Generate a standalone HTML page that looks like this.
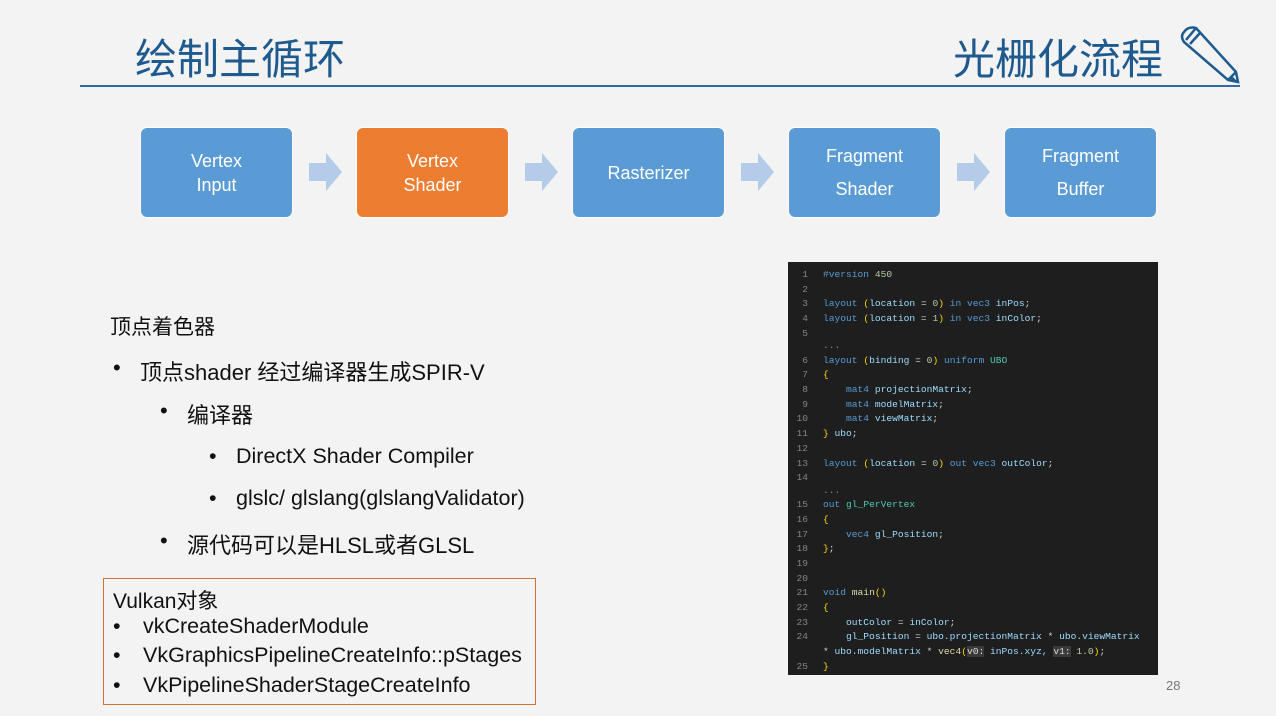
<!DOCTYPE html><html><head><meta charset="utf-8"><style>
body{margin:0;width:1276px;height:716px;background:#f3f3f3;position:relative;overflow:hidden;font-family:"Liberation Sans","Noto Sans CJK SC",sans-serif}
.a{position:absolute}
.t{color:#1f5a8f;font-size:42px;font-family:"Noto Sans CJK SC",sans-serif;line-height:1}
.box{position:absolute;top:127px;width:153px;height:91px;background:#5b9bd5;border:1px solid #fff;border-radius:7px;color:#fff;font-size:18px;display:flex;align-items:center;justify-content:center;text-align:center;line-height:24px;box-sizing:border-box}
.txt{position:absolute;color:#111;font-size:21px;font-family:"Liberation Sans","Noto Sans CJK SC",sans-serif;white-space:nowrap}
.txt b{font-weight:normal;position:absolute;left:-27px}
.code{position:absolute;left:788px;top:262px;width:370px;height:413px;background:#1e1e1e;font-family:"Liberation Mono",monospace;font-size:9.6px;color:#9cdcfe}
.code div{height:14.7px;line-height:14.7px;white-space:pre;position:relative;padding-left:35px}
.code div.e{height:12.3px;line-height:10px;color:#888}
.code span.n{position:absolute;left:0;width:20px;text-align:right;color:#858585}
.k{color:#569cd6}.y{color:#ffd700}.g{color:#4ec9b0}.f{color:#dcdcaa}.c{color:#b5cea8}.w{color:#d4d4d4}.h{background:#3a3a3a;color:#ddd}
</style></head><body>
<div class="a t" style="left:135px;top:36px">绘制主循环</div>
<div class="a t" style="left:953px;top:36px">光栅化流程</div>
<svg class="a" style="left:1178px;top:24px" width="64" height="62" viewBox="0 0 64 62"><g fill="none" stroke="#1f5a8f" stroke-width="2.5"><path d="M6 8 Q10 2 18 4 L58 48 L60 58 L50 56 L6 18 Q2 12 6 8Z"/><path d="M18 4 L8 16 M22 9 L12 20"/><path d="M50 56 L58 48"/></g><path d="M54 52 L60 58 L52 57Z" fill="#1f5a8f"/></svg>
<div class="a" style="left:80px;top:85px;width:1160px;height:2px;background:#2e6da4"></div>
<div class="box" style="left:140px">Vertex<br>Input</div>
<div class="box" style="left:356px;background:#ed7d31">Vertex<br>Shader</div>
<div class="box" style="left:572px">Rasterizer</div>
<div class="box" style="left:788px;line-height:33px">Fragment<br>Shader</div>
<div class="box" style="left:1004px;line-height:33px">Fragment<br>Buffer</div>
<svg class="a" style="left:0;top:0" width="1276" height="300"><g fill="#b4cbe9"><path d="M309 163h17v-10l16 19-16 19v-10h-17z"/><path d="M525 163h17v-10l16 19-16 19v-10h-17z"/><path d="M741 163h17v-10l16 19-16 19v-10h-17z"/><path d="M957 163h17v-10l16 19-16 19v-10h-17z"/></g></svg>
<div class="txt" style="left:110px;top:311px">顶点着色器</div>
<div class="txt" style="left:140px;top:355px;font-size:22px"><b>•</b>顶点shader 经过编译器生成SPIR-V</div>
<div class="txt" style="left:187px;top:398px;font-size:22px"><b>•</b>编译器</div>
<div class="txt" style="left:236px;top:444px;font-size:21.5px"><b>•</b>DirectX Shader Compiler</div>
<div class="txt" style="left:236px;top:486px;font-size:21.5px"><b>•</b>glslc/ glslang(glslangValidator)</div>
<div class="txt" style="left:187px;top:528px;font-size:22px"><b>•</b>源代码可以是HLSL或者GLSL</div>
<div class="a" style="left:103px;top:578px;width:433px;height:127px;border:1px solid #d0703a;box-sizing:border-box"></div>
<div class="txt" style="left:113px;top:585px;font-size:21px">Vulkan对象</div>
<div class="txt" style="left:143px;top:614px;font-size:21.5px"><b style="left:-30px">•</b>vkCreateShaderModule</div>
<div class="txt" style="left:143px;top:643px;font-size:21.5px"><b style="left:-30px">•</b>VkGraphicsPipelineCreateInfo::pStages</div>
<div class="txt" style="left:143px;top:673px;font-size:21.5px"><b style="left:-30px">•</b>VkPipelineShaderStageCreateInfo</div>
<div class="code"><div style="height:6px"></div>
<div><span class="n">1</span><span class="k">#version</span> <span class="c">450</span></div>
<div><span class="n">2</span></div>
<div><span class="n">3</span><span class="k">layout</span> <span class="y">(</span>location <span class="w">=</span> <span class="c">0</span><span class="y">)</span> <span class="k">in vec3</span> inPos<span class="w">;</span></div>
<div><span class="n">4</span><span class="k">layout</span> <span class="y">(</span>location <span class="w">=</span> <span class="c">1</span><span class="y">)</span> <span class="k">in vec3</span> inColor<span class="w">;</span></div>
<div><span class="n">5</span></div>
<div class="e">...</div>
<div><span class="n">6</span><span class="k">layout</span> <span class="y">(</span>binding <span class="w">=</span> <span class="c">0</span><span class="y">)</span> <span class="k">uniform</span> <span class="g">UBO</span></div>
<div><span class="n">7</span><span class="y">{</span></div>
<div><span class="n">8</span>    <span class="k">mat4</span> projectionMatrix<span class="w">;</span></div>
<div><span class="n">9</span>    <span class="k">mat4</span> modelMatrix<span class="w">;</span></div>
<div><span class="n">10</span>    <span class="k">mat4</span> viewMatrix<span class="w">;</span></div>
<div><span class="n">11</span><span class="y">}</span> ubo<span class="w">;</span></div>
<div><span class="n">12</span></div>
<div><span class="n">13</span><span class="k">layout</span> <span class="y">(</span>location <span class="w">=</span> <span class="c">0</span><span class="y">)</span> <span class="k">out vec3</span> outColor<span class="w">;</span></div>
<div><span class="n">14</span></div>
<div class="e">...</div>
<div><span class="n">15</span><span class="k">out</span> <span class="g">gl_PerVertex</span></div>
<div><span class="n">16</span><span class="y">{</span></div>
<div><span class="n">17</span>    <span class="k">vec4</span> gl_Position<span class="w">;</span></div>
<div><span class="n">18</span><span class="y">}</span><span class="w">;</span></div>
<div><span class="n">19</span></div>
<div><span class="n">20</span></div>
<div><span class="n">21</span><span class="k">void</span> <span class="f">main</span><span class="y">()</span></div>
<div><span class="n">22</span><span class="y">{</span></div>
<div><span class="n">23</span>    outColor <span class="w">=</span> inColor<span class="w">;</span></div>
<div><span class="n">24</span>    gl_Position <span class="w">=</span> ubo.projectionMatrix <span class="w">*</span> ubo.viewMatrix</div>
<div><span class="w">*</span> ubo.modelMatrix <span class="w">*</span> <span class="f">vec4</span><span class="y">(</span><span class="h">v0:</span> inPos.xyz, <span class="h">v1:</span> <span class="c">1.0</span><span class="y">)</span><span class="w">;</span></div>
<div><span class="n">25</span><span class="y">}</span></div>
</div>
<div class="a" style="left:1166px;top:678px;font-size:13px;color:#777">28</div>
</body></html>
